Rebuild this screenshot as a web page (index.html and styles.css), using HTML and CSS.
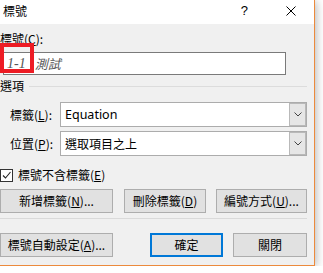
FILE: index.html
```html
<!DOCTYPE html>
<html>
<head>
    <meta charset='utf-8'>
    <title>標號</title>
    <link rel="stylesheet" href="styles.css">
</head>
<body>
    <div class="win">
        <div class="title">
            <span class="cap">標號</span>
            <span class="help">?</span>
            <svg class="close" viewBox="0 0 10 10" width="10" height="10"><path d="M.5 .5l9 9M9.5 .5l-9 9" stroke="#000" stroke-width="1" fill="none"/></svg>
        </div>
        <div class="main">
            <div class="lbl">標號(<u>C</u>):</div>
            <div class="field">
                <span class="num">1-1</span><span class="txt">測試</span>
                <div class="mark"></div>
            </div>
            <div class="grp"><span>選項</span><i></i></div>
            <div class="row">
                <span class="rl">標籤(<u>L</u>):</span>
                <div class="combo"><span>Equation</span><b><svg viewBox="0 0 8 5" width="8" height="5"><path d="M.5 .5l3.5 3.5 3.5-3.5" stroke="#444" fill="none"/></svg></b></div>
            </div>
            <div class="row">
                <span class="rl">位置(<u>P</u>):</span>
                <div class="combo"><span class="cjk">選取項目之上</span><b><svg viewBox="0 0 8 5" width="8" height="5"><path d="M.5 .5l3.5 3.5 3.5-3.5" stroke="#444" fill="none"/></svg></b></div>
            </div>
            <div class="chk">
                <span class="box"><svg viewBox="0 0 11 11" width="11" height="11"><path d="M2 5.5l2.5 2.5 5-6" stroke="#222" stroke-width="1.1" fill="none"/></svg></span>
                <span>標號不含標籤(<u>E</u>)</span>
            </div>
            <div class="btns">
                <button class="w1">新增標籤(<u>N</u>)...</button>
                <button class="w2">刪除標籤(<u>D</u>)</button>
                <button class="w3">編號方式(<u>U</u>)...</button>
            </div>
            <div class="sep"></div>
            <div class="btns b2">
                <button class="w1">標號自動設定(<u>A</u>)...</button>
                <button class="ok">確定</button>
                <button class="cl">關閉</button>
            </div>
        </div>
    </div>
</body>
</html>
```

FILE: styles.css
```css
body {
    margin: 0;
    background: #fff;
    font-family: "Noto Sans CJK TC", "Noto Sans", sans-serif;
    font-size: 12px;
    color: #000;
}

.win {
    width: 314px;
    height: 265px;
    display: flex;
    flex-direction: column;
    border-right: 1px solid #ec8a3c;
    border-bottom: 1px solid #ec8a3c;
    box-shadow: 1px 1px 9px rgba(0, 0, 0, .3);
}

.title {
    height: 24px;
    background: #fff;
    display: flex;
    align-items: center;
    line-height: 16px;
}
.cap { margin-left: 3px; margin-top: -2px; }
.help {
    margin-left: auto;
    font-family: "Liberation Sans", sans-serif;
    font-size: 13px;
    margin-top: -3px;
}
.close { margin: -2px 18px 0 38px; }

.main {
    flex: 1;
    background: #f0f0f0;
    padding-right: 7px;
    line-height: 16px;
}

.lbl { margin-top: 7px; }

.field {
    position: relative;
    margin: 5px 0 0 3px;
    width: 281px;
    height: 21px;
    border: 1px solid #7a7a7a;
    background: #fff;
    display: flex;
    align-items: center;
    color: #555;
}
.num {
    font-family: "Liberation Serif", serif;
    font-style: italic;
    font-size: 14px;
    margin-left: 3px;
}
.txt { font-style: italic; font-size: 13px; margin-left: 9px; }
.mark {
    position: absolute;
    left: -4px;
    top: -10px;
    width: 26px;
    height: 22px;
    border: 4px solid #ed1c24;
}

.grp {
    display: flex;
    align-items: center;
    margin-top: 3px;
}
.grp i {
    flex: 1;
    height: 1px;
    background: #dcdcdc;
    margin-left: 5px;
}

.row {
    display: flex;
    align-items: center;
    margin-top: 8px;
    height: 25px;
}
.row + .row { margin-top: 4px; }
.rl { width: 50px; margin-left: 10px; }
.combo {
    flex: 1;
    height: 23px;
    border: 1px solid #acacac;
    background: #fff;
    display: flex;
    align-items: stretch;
}
.combo span {
    flex: 1;
    display: flex;
    align-items: center;
    padding-left: 4px;
    font-family: "Noto Sans", sans-serif;
    font-size: 12.5px;
}
.combo span.cjk { font-family: "Noto Sans CJK TC", sans-serif; font-size: 12px; }
.combo b {
    width: 15px;
    border: 1px solid #b9b9b9;
    background: #e6e6e6;
    display: flex;
    align-items: center;
    justify-content: center;
}

.chk {
    display: flex;
    align-items: center;
    gap: 5px;
    margin-top: 11px;
}
.box {
    width: 11px;
    height: 11px;
    border: 1px solid #333;
    background: #fff;
    display: flex;
}

.btns {
    display: flex;
    margin-top: 6px;
}
button {
    height: 24px;
    padding: 0;
    font: inherit;
    color: #000;
    background: #e1e1e1;
    border: 1px solid #adadad;
}
.w1 { width: 113px; }
.w2 { width: 82px; margin-left: 11px; }
.w3 { width: 91px; margin-left: 10px; }
.ok {
    width: 73px;
    margin-left: 37px;
    border: 2px solid #0078d7;
}
.cl { width: 74px; margin-left: 10px; }

.sep {
    height: 1px;
    background: #dadada;
    margin: 5px 0 0 0;
}
.b2 { margin-top: 14px; }
```
